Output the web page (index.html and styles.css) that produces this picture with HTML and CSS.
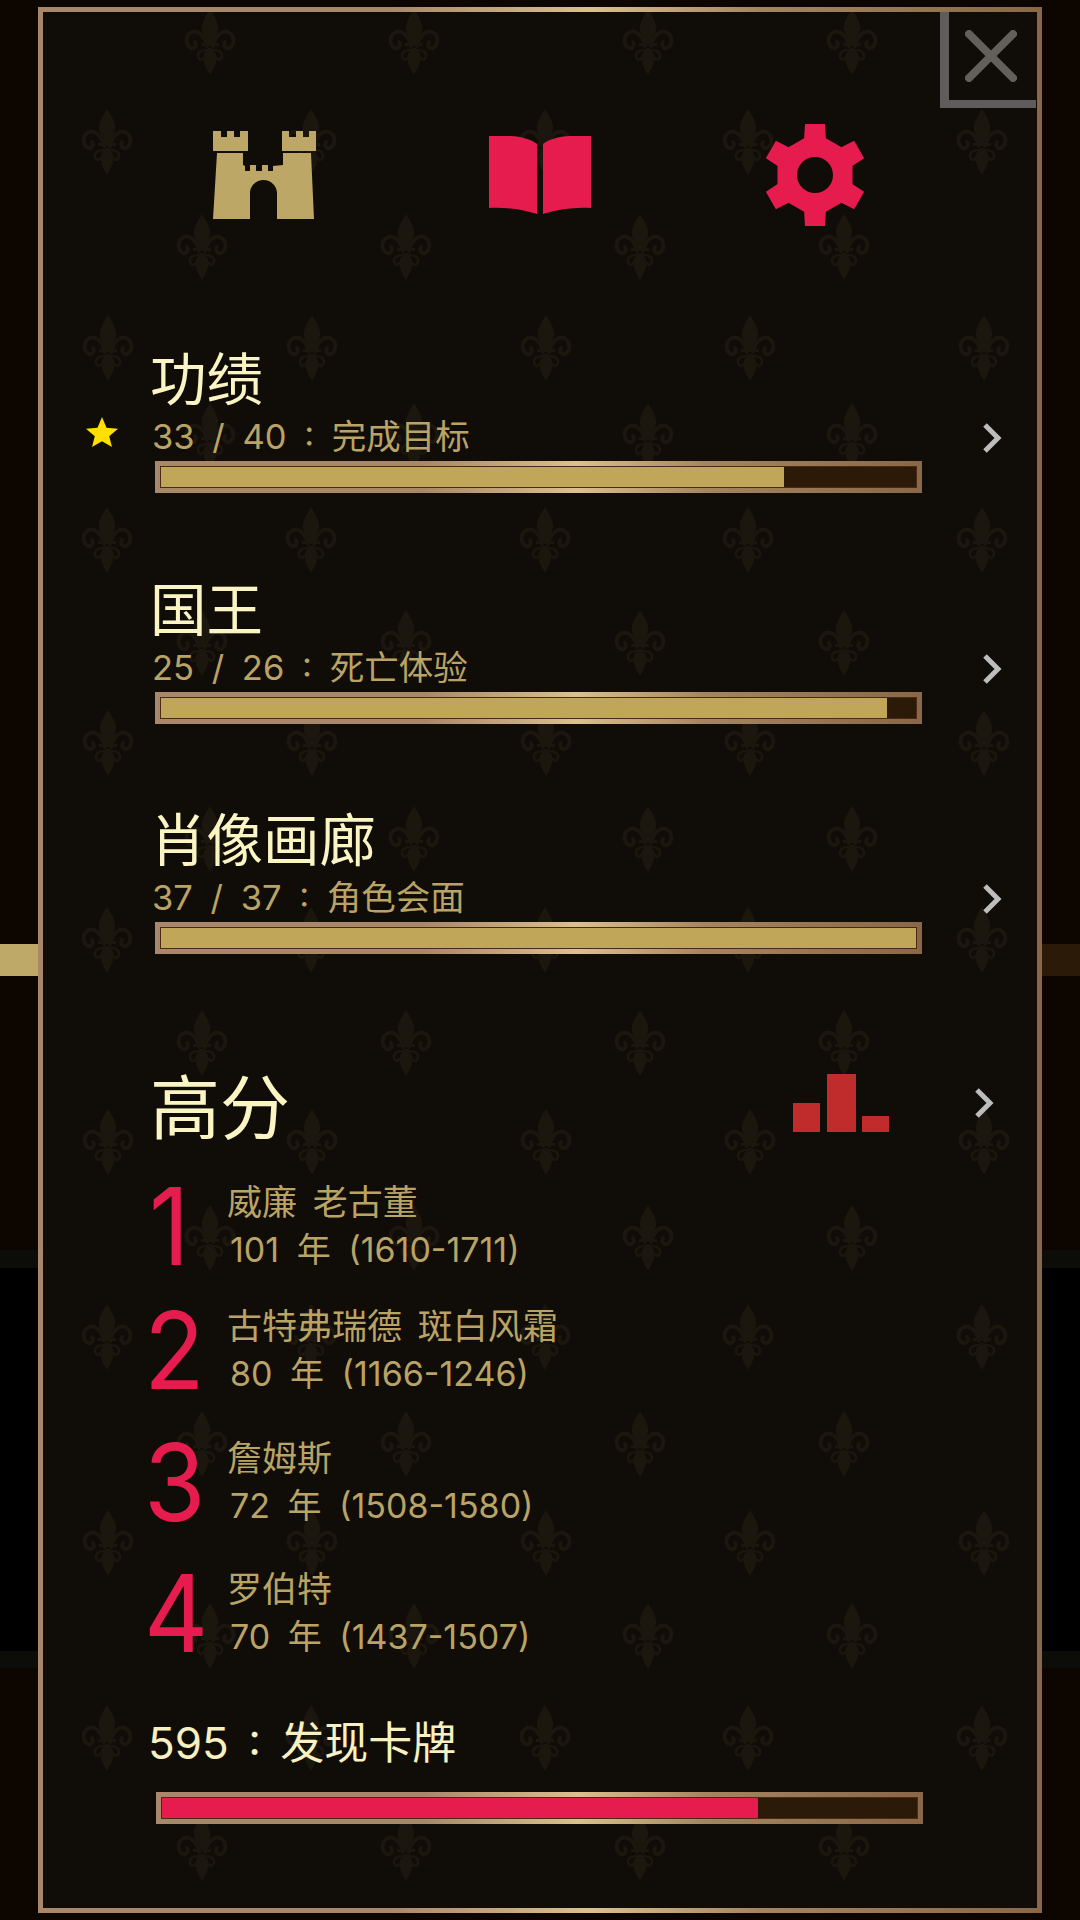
FILE: index.html
```html
<!DOCTYPE html>
<html lang="zh-CN">
<head>
<meta charset="utf-8">
<title>功绩</title>
<link rel="stylesheet" href="styles.css">
</head>
<body>
<div class="page">
  <div class="backdrop">
    <div class="band band-a"></div>
    <div class="band band-strip"><div class="strip-gold"></div></div>
    <div class="band band-b"></div>
    <div class="band band-c"></div>
    <div class="band band-d"></div>
    <div class="band band-c2"></div>
    <div class="band band-e"></div>
  </div>
  <main class="panel">
    <svg class="pattern" viewBox="43 12 994 1896" aria-hidden="true">
      <defs>
        <g id="fleur">
          <path class="f-fill" d="M0-33C6-24 9-18 8-12 7-6 3-2 2 2L-2 2C-3-2-7-6-8-12-9-18-6-24 0-33Z"/>
          <path class="f-fill" d="M0 33C-4 26-8 20-6 12L-2 6 2 6 6 12C8 20 4 26 0 33Z"/>
          <rect class="f-fill" x="-9" y="1" width="18" height="3"/>
          <path class="f-line" d="M-3 4C-5-6-12-12-18-10-25-7-25 3-19 6-15 7-13 3-15 0"/>
          <path class="f-line" d="M3 4C5-6 12-12 18-10 25-7 25 3 19 6 15 7 13 3 15 0"/>
          <path class="f-thin" d="M-3 8C-8 8-13 10-12 15-11 18-8 19-7 16"/>
          <path class="f-thin" d="M3 8C8 8 13 10 12 15 11 18 8 19 7 16"/>
        </g>
      </defs>
      <use href="#fleur" x="210" y="42"/><use href="#fleur" x="414" y="42"/><use href="#fleur" x="648" y="42"/><use href="#fleur" x="852" y="42"/>
      <use href="#fleur" x="107" y="142"/><use href="#fleur" x="311" y="142"/><use href="#fleur" x="545" y="142"/><use href="#fleur" x="748" y="142"/><use href="#fleur" x="982" y="142"/>
      <use href="#fleur" x="202" y="247"/><use href="#fleur" x="406" y="247"/><use href="#fleur" x="640" y="247"/><use href="#fleur" x="844" y="247"/>
      <use href="#fleur" x="108" y="348"/><use href="#fleur" x="312" y="348"/><use href="#fleur" x="546" y="348"/><use href="#fleur" x="750" y="348"/><use href="#fleur" x="984" y="348"/>
      <use href="#fleur" x="210" y="436"/><use href="#fleur" x="414" y="436"/><use href="#fleur" x="648" y="436"/><use href="#fleur" x="852" y="436"/>
      <use href="#fleur" x="107" y="540"/><use href="#fleur" x="311" y="540"/><use href="#fleur" x="545" y="540"/><use href="#fleur" x="748" y="540"/><use href="#fleur" x="982" y="540"/>
      <use href="#fleur" x="202" y="643"/><use href="#fleur" x="406" y="643"/><use href="#fleur" x="640" y="643"/><use href="#fleur" x="844" y="643"/>
      <use href="#fleur" x="108" y="743"/><use href="#fleur" x="312" y="743"/><use href="#fleur" x="546" y="743"/><use href="#fleur" x="750" y="743"/><use href="#fleur" x="984" y="743"/>
      <use href="#fleur" x="210" y="839"/><use href="#fleur" x="414" y="839"/><use href="#fleur" x="648" y="839"/><use href="#fleur" x="852" y="839"/>
      <use href="#fleur" x="107" y="940"/><use href="#fleur" x="311" y="940"/><use href="#fleur" x="545" y="940"/><use href="#fleur" x="748" y="940"/><use href="#fleur" x="982" y="940"/>
      <use href="#fleur" x="202" y="1043"/><use href="#fleur" x="406" y="1043"/><use href="#fleur" x="640" y="1043"/><use href="#fleur" x="844" y="1043"/>
      <use href="#fleur" x="108" y="1142"/><use href="#fleur" x="312" y="1142"/><use href="#fleur" x="546" y="1142"/><use href="#fleur" x="750" y="1142"/><use href="#fleur" x="984" y="1142"/>
      <use href="#fleur" x="210" y="1238"/><use href="#fleur" x="414" y="1238"/><use href="#fleur" x="648" y="1238"/><use href="#fleur" x="852" y="1238"/>
      <use href="#fleur" x="107" y="1337"/><use href="#fleur" x="311" y="1337"/><use href="#fleur" x="545" y="1337"/><use href="#fleur" x="748" y="1337"/><use href="#fleur" x="982" y="1337"/>
      <use href="#fleur" x="202" y="1444"/><use href="#fleur" x="406" y="1444"/><use href="#fleur" x="640" y="1444"/><use href="#fleur" x="844" y="1444"/>
      <use href="#fleur" x="108" y="1543"/><use href="#fleur" x="312" y="1543"/><use href="#fleur" x="546" y="1543"/><use href="#fleur" x="750" y="1543"/><use href="#fleur" x="984" y="1543"/>
      <use href="#fleur" x="210" y="1636"/><use href="#fleur" x="414" y="1636"/><use href="#fleur" x="648" y="1636"/><use href="#fleur" x="852" y="1636"/>
      <use href="#fleur" x="107" y="1738"/><use href="#fleur" x="311" y="1738"/><use href="#fleur" x="545" y="1738"/><use href="#fleur" x="748" y="1738"/><use href="#fleur" x="982" y="1738"/>
      <use href="#fleur" x="202" y="1848"/><use href="#fleur" x="406" y="1848"/><use href="#fleur" x="640" y="1848"/><use href="#fleur" x="844" y="1848"/>
    </svg>

    <button class="close" aria-label="关闭">
      <svg class="close-x" viewBox="0 0 52 52"><path d="M4 4 48 48M48 4 4 48"/></svg>
    </button>

    <div class="content">
      <nav class="tabs">
        <svg class="tab-icon castle" viewBox="0 0 104 88">
          <path d="M0 0H8V6H14V0H21V6H27V0H35V20H0Z"/>
          <path d="M69 0H76V6H83V0H90V6H96V0H103V20H69Z"/>
          <path fill-rule="evenodd" d="M4 22H30V34L32 35V40H37V34H43V40H49V34H55V40H60V35L70 34V22H98L101 88H64V62C64 55 58 49 50.500 49 43 49 37 55 37 62V88H0Z"/>
        </svg>
        <svg class="tab-icon book" viewBox="0 0 102 78">
          <path d="M0 0C20-1 38 0 48 8V78C32 73 16 71 0 72Z"/>
          <path d="M102 0C82-1 64 0 54 8V78C70 73 86 71 102 72Z"/>
        </svg>
        <svg class="tab-icon gear" viewBox="-52 -52 104 104">
          <path fill-rule="evenodd" d="M0-43 37.500-21.500V21.500L0 43-37.500 21.500V-21.500ZM0-18A18 18 0 1 0 0 18 18 18 0 1 0 0-18Z"/>
          <path d="M-10-51H10L11-35H-11Z"/>
          <path d="M-10-51H10L11-35H-11Z" transform="rotate(60)"/>
          <path d="M-10-51H10L11-35H-11Z" transform="rotate(120)"/>
          <path d="M-10-51H10L11-35H-11Z" transform="rotate(180)"/>
          <path d="M-10-51H10L11-35H-11Z" transform="rotate(240)"/>
          <path d="M-10-51H10L11-35H-11Z" transform="rotate(300)"/>
        </svg>
      </nav>

      <section class="stat">
        <h2 class="stat-title">功绩</h2>
        <svg class="star" viewBox="0 0 32 30"><path d="M16 0 20.500 10.800 32 11.700 23.200 19.200 26 30 16 24.200 6 30 8.800 19.200 0 11.700 11.500 10.800Z"/></svg>
        <p class="stat-sub">33 / 40 : 完成目标</p>
        <svg class="chevron" viewBox="0 0 20 30"><path d="M3 2 16 15 3 28"/></svg>
        <div class="bar"><div class="bar-fill" style="width:82.5%"></div></div>
      </section>

      <section class="stat">
        <h2 class="stat-title">国王</h2>
        <p class="stat-sub">25 / 26 : 死亡体验</p>
        <svg class="chevron" viewBox="0 0 20 30"><path d="M3 2 16 15 3 28"/></svg>
        <div class="bar"><div class="bar-fill" style="width:96.15%"></div></div>
      </section>

      <section class="stat">
        <h2 class="stat-title">肖像画廊</h2>
        <p class="stat-sub">37 / 37 : 角色会面</p>
        <svg class="chevron" viewBox="0 0 20 30"><path d="M3 2 16 15 3 28"/></svg>
        <div class="bar"><div class="bar-fill" style="width:100%"></div></div>
      </section>

      <header class="score-head">
        <h2 class="score-title">高分</h2>
        <svg class="chart" viewBox="0 0 96 58">
          <rect x="0" y="29" width="27" height="29"/>
          <rect x="34" y="0" width="29" height="58"/>
          <rect x="69" y="42" width="27" height="16"/>
        </svg>
        <svg class="chevron" viewBox="0 0 20 30"><path d="M3 2 16 15 3 28"/></svg>
      </header>

      <ol class="scores">
        <li class="score"><span class="rank">1</span><div><p class="name">威廉 老古董</p><p class="years">101 年 (1610-1711)</p></div></li>
        <li class="score"><span class="rank">2</span><div><p class="name">古特弗瑞德 斑白风霜</p><p class="years">80 年 (1166-1246)</p></div></li>
        <li class="score"><span class="rank">3</span><div><p class="name">詹姆斯</p><p class="years">72 年 (1508-1580)</p></div></li>
        <li class="score"><span class="rank">4</span><div><p class="name">罗伯特</p><p class="years">70 年 (1437-1507)</p></div></li>
      </ol>

      <p class="found">595 : 发现卡牌</p>
      <div class="bar bar-red"><div class="bar-fill" style="width:79%"></div></div>
    </div>
  </main>
</div>
</body>
</html>
```

FILE: styles.css
```css
* { box-sizing: border-box; }
html, body { margin: 0; padding: 0; background: #0d0600; }
body {
  width: 1080px;
  height: 1920px;
  overflow: hidden;
  font-family: Inter, "Noto Sans CJK SC", sans-serif;
}
h2, p, ol { margin: 0; padding: 0; font-weight: 400; }
ol { list-style: none; }

.page { position: relative; width: 1080px; height: 1920px; }

.backdrop { display: flex; flex-direction: column; height: 100%; }
.band-a { height: 944px; background: #0d0600; }
.band-strip { height: 32px; background: #2c1a08; }
.strip-gold { width: 38px; height: 100%; background: #bfa968; }
.band-b { height: 274px; background: #0d0600; }
.band-c { height: 18px; background: #0c0c08; }
.band-d { height: 383px; background: #000; }
.band-c2 { height: 17px; background: #0c0c08; }
.band-e { flex: 1; background: #0d0600; }

.panel {
  position: absolute;
  left: 38px;
  top: 7px;
  width: 1004px;
  height: 1906px;
  background: #100c07;
  border: 5px solid #a5825f;
  border-image: linear-gradient(90deg, #a9876a 0%, #a9886a 35%, #dcc08e 55%, #a58560 72%, #8a6847 100%) 1;
}

.pattern { position: absolute; left: 0; top: 0; width: 994px; height: 1896px; }
.f-fill { fill: #1b160e; }
.f-line { fill: none; stroke: #1b160e; stroke-width: 4; stroke-linecap: round; }
.f-thin { fill: none; stroke: #1b160e; stroke-width: 2.500; stroke-linecap: round; }

.close {
  position: absolute;
  top: 0;
  right: 1px;
  width: 96px;
  height: 96px;
  padding: 0;
  background: none;
  border: 0;
  border-left: 9px solid #5f5d5b;
  border-bottom: 8px solid #5f5d5b;
}
.close-x { position: absolute; left: 16px; top: 18px; width: 52px; height: 52px; }
.close-x path { fill: none; stroke: #625f5c; stroke-width: 8; stroke-linecap: round; }

.content { position: relative; display: flex; flex-direction: column; height: 100%; }

.tabs {
  display: grid;
  grid-template-columns: repeat(3, 275px);
  align-items: center;
  justify-items: center;
  height: 102px;
  margin-top: 111px;
  padding-left: 84.500px;
}
.tab-icon { display: block; }
.castle { width: 104px; height: 88px; fill: #bca766; }
.book { width: 102px; height: 78px; fill: #e61c4e; }
.gear { width: 104px; height: 104px; fill: #e61c4e; }

.stat {
  display: grid;
  grid-template-columns: 112px 767px 1fr;
  margin-bottom: 86.500px;
  align-items: center;
}
.tabs + .stat { margin-top: 124px; }
.stat-title {
  grid-column: 2;
  grid-row: 1;
  font-size: 56.500px;
  line-height: 60px;
  color: #fbf5c3;
  margin: 1px 0 -1px -5px;
}
.star { grid-column: 1; grid-row: 2; width: 32px; height: 30px; margin: 0 0 6px 43px; fill: #ffe000; }
.stat-sub {
  grid-column: 2;
  grid-row: 2;
  font-size: 34.500px;
  line-height: 40px;
  color: #b9a365;
  word-spacing: 8px;
  margin: 8px 0 4px -3px;
}
.stat .chevron { grid-column: 3; grid-row: 2; margin: 6px 0 0 60px; }
.chevron { display: block; width: 20px; height: 30px; }
.chevron path { fill: none; stroke: #bdbdbd; stroke-width: 5; }

.bar {
  grid-column: 2;
  grid-row: 3;
  width: 767px;
  height: 32px;
  padding: 1px;
  background: #2c1a08;
  border: 5px solid #a5825f;
  border-image: linear-gradient(90deg, #a9876a 0%, #a9886a 35%, #dcc08e 55%, #a58560 72%, #8a6847 100%) 1;
  box-shadow: inset 0 0 0 1px #4a2a14;
}
.bar-fill { height: 100%; background: #c0a658; }
.bar-red { margin: 24px 0 0 113px; }
.bar-red .bar-fill { background: #e61c4e; }

.score-head {
  display: flex;
  align-items: center;
  height: 80px;
  margin: 26.500px 0 0 107px;
}
.score-title { flex: 1; font-size: 70px; line-height: 80px; color: #fbf5c3; margin-top: 4px; }
.chart { display: block; width: 96px; height: 58px; margin: 0 85px 8px 0; fill: #c02c2c; }
.score-head .chevron { margin: 0 43px 8px 0; }

.scores { display: flex; flex-direction: column; margin: 35px 0 0 105px; }
.score { display: flex; align-items: center; height: 88px; }
.score:nth-child(2) { margin-top: 36px; }
.score:nth-child(3) { margin-top: 44px; }
.score:nth-child(4) { margin-top: 43px; }
.rank {
  display: block;
  width: 80px;
  font-size: 107px;
  line-height: 88px;
  color: #e61c4e;
  transform: translateX(-4px) scaleX(0.93);
  transform-origin: left center;
}
.score:first-child .rank { transform: translateX(1px) scaleX(0.93); }
.name { font-size: 35px; line-height: 40px; color: #b9a365; word-spacing: 6px; margin-left: -1px; }
.years { font-size: 34px; line-height: 40px; margin-top: 8px; margin-left: 2px; color: #b9a365; word-spacing: 8px; }

.found {
  margin: 61px 0 0 105px;
  font-size: 44px;
  line-height: 50px;
  color: #f7f0c0;
  word-spacing: 7px;
}
```
